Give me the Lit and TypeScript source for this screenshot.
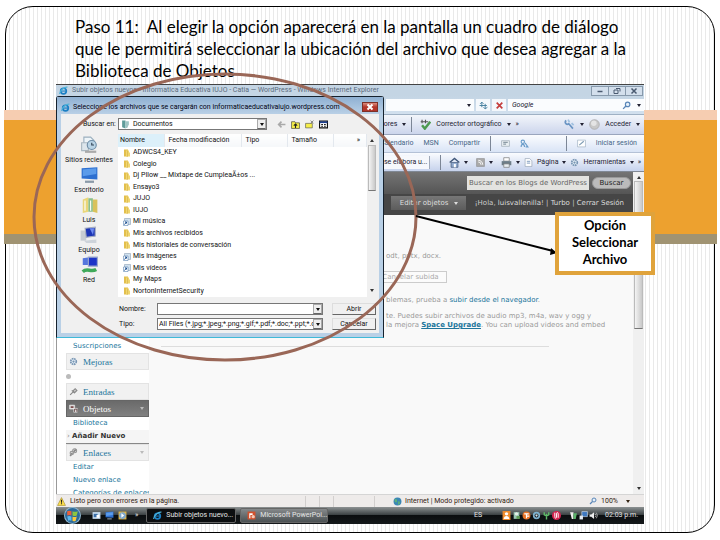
import { LitElement, html, css, svg } from "lit";
import { customElement } from "lit/decorators.js";

type Kind = "folder" | "link";
const files: [string, Kind][] = [
  ["ADWCS4_KEY", "folder"],
  ["Colegio", "folder"],
  ["Dj PIlow __ Mixtape de CumpleaÃ±os ...", "folder"],
  ["Ensayo3", "folder"],
  ["JUJO", "folder"],
  ["IUJO", "folder"],
  ["Mi música", "link"],
  ["Mis archivos recibidos", "folder"],
  ["Mis historiales de conversación", "folder"],
  ["Mis imágenes", "link"],
  ["Mis vídeos", "link"],
  ["My Maps", "folder"],
  ["NortonInternetSecurity", "folder"],
];

const shapes: Record<string, unknown> = {
  ie: svg`<circle cx="8" cy="9" r="5" fill="none" stroke="#1b7fc4" stroke-width="3"/><path d="M4 9h9" stroke="#1b7fc4" stroke-width="2"/><path d="M1 14C1 9 9 1 15 2" fill="none" stroke="#4db3d8" stroke-width="2"/>`,
  folder: svg`<path d="M2 1h8v14H2z" fill="#e3bf4c"/><path d="M6 3h6v4h2v8H6z" fill="#f0d670"/><path d="M9 4v11" stroke="#cfa93c"/>`,
  link: svg`<path d="M3 1h12v12H3z" fill="#cfe0ee" stroke="#7c93a8"/><path d="M1 6h9v9H1z" fill="#fff" stroke="#3c6fa5"/><path d="M3 13l4-5M4 8h3v3" stroke="#1b4f8f" stroke-width="2" fill="none"/>`,
  docs: svg`<path d="M2 1h6v14l-6-2z" fill="#5f9c9a"/><path d="M8 2h6v6l-3 6H8z" fill="#9fc5c4"/>`,
  back: svg`<path d="M15 8H3M8 3L3 8l5 5" fill="none" stroke="#a9a9a9" stroke-width="3"/>`,
  up: svg`<path d="M1 3h6l1 2h7v10H1z" fill="#f5ee4a" stroke="#222"/><path d="M8 14V7M5 10l3-3 3 3" fill="none" stroke="#222" stroke-width="2"/>`,
  add: svg`<path d="M1 6h12v8H1z" fill="#f5ee4a" stroke="#444"/><path d="M10 1l5 5M15 1l-5 5" stroke="#777" stroke-width="1.5"/>`,
  view: svg`<path d="M1 2h14v12H1z" fill="#fff" stroke="#111" stroke-width="2"/><path d="M1 4h14" stroke="#1d3f8f" stroke-width="3"/><path d="M4 8h3M9 8h3M4 11h3M9 11h3" stroke="#111" stroke-width="2"/>`,
  recent: svg`<path d="M3 1h6l3 3v7H3z" fill="#eef5f9" stroke="#9bb0bf"/><path d="M1 6h6v7H1z" fill="#dde6ec" stroke="#a9b7c1"/><circle cx="10" cy="8" r="4" fill="#b9d4e6" stroke="#6d8ca5"/><path d="M10 6v2h2" stroke="#345" fill="none"/><path d="M4 14h10" stroke="#aaa" stroke-width="2"/>`,
  desk: svg`<path d="M1 2l14-1v11l-14-1z" fill="#2d6fd0"/><path d="M2 3l12-1v5L2 9z" fill="#5b9bea"/><path d="M4 14h8" stroke="#8a9aa8" stroke-width="2"/>`,
  user: svg`<path d="M2 3l5-2v13l-5 1z" fill="#e9d678"/><path d="M7 2h4v12H7z" fill="#8bbf8a"/><path d="M11 3h4v12l-4-1z" fill="#d9c25c"/><path d="M4 4v9M9 4v9" stroke="#fff"/>`,
  pc: svg`<path d="M1 4h5v9H1z" fill="#c6ccd2"/><path d="M5 2l9-1v8l-8 1z" fill="#1c35b5" stroke="#a4acc0"/><path d="M9 2l4 0-1 6z" fill="#6f8cf0"/><path d="M4 13l11-1v3H6z" fill="#cdd3da"/>`,
  net: svg`<path d="M2 2l6-1v7H2z" fill="#5577dd"/><path d="M7 1h8v8H7z" fill="#1c35c8" stroke="#9aa8cc"/><path d="M2 14c4-4 7 1 12-2" stroke="#3faa5a" stroke-width="3" fill="none"/>`,
  refresh: svg`<path d="M5 2v9M2 5l3-3 3 3M11 14V5M8 11l3 3 4-3M1 8h13" fill="none" stroke="#3f7c9c" stroke-width="1.6"/>`,
  stop: svg`<path d="M3 3l10 10M13 3L3 13" stroke="#c43d3d" stroke-width="3"/>`,
  lens: svg`<circle cx="10" cy="6" r="4" fill="#e5f0fa" stroke="#5a86b8" stroke-width="2"/><path d="M7 9l-5 5" stroke="#5a86b8" stroke-width="2.5"/>`,
  check: svg`<path d="M1 4h11M3 1v5M8 1v5" stroke="#555" stroke-width="1.6"/><path d="M3 9l4 5 8-10" fill="none" stroke="#4d9a50" stroke-width="3.5"/>`,
  wrench: svg`<path d="M3 2c-3 4 1 7 4 5l6 7" stroke="#6b95c4" stroke-width="2.5" fill="none"/><path d="M6 1l2 4M11 6l3 3" stroke="#9fc0e0" stroke-width="2.5"/>`,
  ball: svg`<circle cx="8" cy="8" r="7" fill="#c8c8c8" stroke="#a5a5a5"/><circle cx="7" cy="6" r="4" fill="#e4e4e4"/>`,
  card: svg`<path d="M1 3h14v10H1z" fill="#e9eff2" stroke="#8c9ba5"/><path d="M4 6h8M4 9h5" stroke="#8c9ba5" stroke-width="2"/>`,
  share: svg`<circle cx="5" cy="5" r="3" fill="none" stroke="#6a9cc9" stroke-width="2"/><path d="M2 14c0-6 6-6 6 0M9 7l5 7h-4" fill="none" stroke="#6a9cc9" stroke-width="2"/>`,
  box: svg`<path d="M1 2h14v12H1z" fill="#fff" stroke="#8fa3b5"/><path d="M4 11l8-7" stroke="#7d9bb3" stroke-width="2"/>`,
  home: svg`<path d="M1 8l7-6 7 6" fill="none" stroke="#40577a" stroke-width="2"/><path d="M3 8h10v7H3z" fill="#8fa8cc" stroke="#40577a"/><path d="M7 10h3v5H7z" fill="#fff"/>`,
  rss: svg`<path d="M1 1h14v14H1z" fill="#aaa" stroke="#888"/><path d="M4 7a5 5 0 015 5M4 4a8 8 0 018 8" stroke="#fff" stroke-width="1.6" fill="none"/>`,
  print: svg`<path d="M4 1h8v5H4z" fill="#fff" stroke="#777"/><path d="M1 6h14v6H1z" fill="#6d7d88"/><path d="M4 10h8v5H4z" fill="#e9eef2" stroke="#777"/>`,
  page: svg`<path d="M2 1h8l4 4v10H2z" fill="#fff" stroke="#8494a8"/><path d="M5 6h6M5 9h6" stroke="#9db3cd" stroke-width="2"/>`,
  gear: svg`<circle cx="8" cy="8" r="5" fill="#e6eff7" stroke="#7795b3" stroke-width="3" stroke-dasharray="3 1"/><circle cx="8" cy="8" r="2" fill="#7795b3"/>`,
  pin: svg`<path d="M2 14l5-5M5 6l5 5M7 7l4-4 3 3-4 4z" fill="#ccc" stroke="#888" stroke-width="2"/>`,
  media: svg`<path d="M1 2h9v7H1z" fill="#ddd" stroke="#eee"/><path d="M3 4h5v3H3z" fill="#744"/><path d="M8 7h7v8H8z" fill="#eee"/><path d="M10 14v-5h4v5" fill="none" stroke="#533" stroke-width="1.5"/>`,
  chain: svg`<path d="M2 14l4-5M8 7l5-5" stroke="#888" stroke-width="3"/><circle cx="10" cy="5" r="3.5" fill="none" stroke="#999" stroke-width="2"/><circle cx="5" cy="9" r="3" fill="none" stroke="#999" stroke-width="2"/>`,
  warn: svg`<path d="M8 1l7 14H1z" fill="#ffe04d" stroke="#9a8420"/><path d="M8 5v5M8 11v2" stroke="#222" stroke-width="2"/>`,
  globe: svg`<circle cx="8" cy="8" r="7" fill="#3a86b5"/><path d="M3 4c3-2 5 1 4 4s-3 1-4 0zM9 8c3-1 4 1 3 4l-3 2z" fill="#5cb37a"/>`,
  flag: svg`<circle cx="8" cy="8" r="8" fill="#8fb6cf"/><circle cx="8" cy="8" r="7" fill="#2c6a9a"/><path d="M3 4q2-1 4 0v4q-2-1-4 0z" fill="#e8603a"/><path d="M8 4q2 1 5 0l-1 4q-2 1-4 0z" fill="#8cc63f"/><path d="M3 9q2-1 4 0v4q-2-1-3 0z" fill="#5cb8ee"/><path d="M8 9q2 1 4 0l-1 4q-1 1-3 0z" fill="#fbc93a"/>`,
  win: svg`<path d="M1 2h14v12H1z" fill="#c8ddf0"/><path d="M3 5h7v6H3z" fill="#3b6fa8"/><path d="M8 7h5v5H8z" fill="#fff"/>`,
  play: svg`<path d="M1 1h14v14H1z" fill="#e0b544"/><circle cx="8" cy="8" r="6" fill="#7fa8cc"/><path d="M6 4l5 4-5 4z" fill="#fff"/>`,
  ppt: svg`<path d="M1 1h14v14H1z" fill="#d2502c"/><path d="M4 4h6v3H6v6H4z" fill="#fff"/><circle cx="11" cy="10" r="3" fill="#f4c8b5"/>`,
  t1: svg`<path d="M1 0h14v16H1z" fill="#ef8c2c"/><circle cx="8" cy="5" r="3" fill="#fff"/><path d="M3 14c0-7 10-7 10 0z" fill="#fff"/>`,
  t2: svg`<path d="M3 2h10v12H3z" fill="#9cc7b5"/><circle cx="8" cy="5" r="3" fill="#e5efe9"/><path d="M8 9h6v5H8z" fill="#5e9a52"/>`,
  t3: svg`<circle cx="8" cy="8" r="7" fill="#e9742a"/><path d="M4 5h8M8 5v8M9 9h4" stroke="#fff" stroke-width="2"/>`,
  t4: svg`<circle cx="8" cy="8" r="5" fill="none" stroke="#7eb2cf" stroke-width="3"/><circle cx="8" cy="8" r="2" fill="#d3e7f1"/>`,
  t5: svg`<path d="M8 15V5M4 2v5l4 2 4-2V2" fill="none" stroke="#5fbb69" stroke-width="2.5"/>`,
  t6: svg`<circle cx="8" cy="8" r="8" fill="#d6224f"/><path d="M5 3v7c0 4 3 3 3 1V5c0-3 3-3 3 0v7" stroke="#fff" stroke-width="1.7" fill="none"/>`,
  t7: svg`<path d="M2 2h6v12H5z" fill="#eee"/><path d="M8 4h6l-2 10H8z" fill="#5cb36b"/>`,
  t8: svg`<path d="M5 1h10v9H5z" fill="#3e78c0" stroke="#dfe8f2"/><path d="M1 8h6v7H1z" fill="#e6edf5"/>`,
  t9: svg`<path d="M1 6h3l5-4v12l-5-4H1z" fill="#eee"/><path d="M11 5q3 3 0 6M13 3q4 5 0 10" stroke="#bbb" stroke-width="1.4" fill="none"/>`,
  min: svg`<path d="M3 9h10" stroke="#4a5a70" stroke-width="3"/>`,
  max: svg`<path d="M6 3h8v6M2 6h8v7H2z" fill="none" stroke="#4a5a70" stroke-width="2"/>`,
  close: svg`<path d="M3 3l10 10M13 3L3 13" stroke="#4a5a70" stroke-width="3"/>`,
  closew: svg`<path d="M3 3l10 10M13 3L3 13" stroke="#fff" stroke-width="4"/>`,
};
const icon = (name: string, size = "") =>
  html`<svg class="i ${size}" viewBox="0 0 16 16" aria-hidden="true">${shapes[name]}</svg>`;
const down = html`<span class="tri"></span>`;

@customElement("app-root")
export class AppRoot extends LitElement {
  static styles = css`
    * { box-sizing: border-box; }
    :host {
      display: block; position: relative; min-height: 100vh; padding: 6px 5px 7px;
      background: #fff; color: #111; font: 7px/9px Roboto, "Noto Sans", sans-serif;
      overflow: hidden;
    }
    button, input, select { font: inherit; color: inherit; margin: 0; padding: 0; border: 0; background: none; border-radius: 0; appearance: none; min-width: 0; }
    a { color: #21759b; text-decoration: none; }
    ul { list-style: none; margin: 0; padding: 0; }
    p, h1, h2 { margin: 0; font-size: inherit; font-weight: inherit; }
    .i { width: 9px; height: 9px; flex: none; display: block; }
    .i.s { width: 8px; height: 8px; }
    .i.m { width: 11px; height: 11px; }
    .i.l { width: 19px; height: 18px; }
    .tri { flex: none; border: 2px solid transparent; border-top: 3px solid currentColor; border-bottom: 0; }
    .grow { flex: 1; }

    .slide {
      min-height: calc(100vh - 13px); border: 1px solid #000; border-radius: 28px;
      padding: 9px 70px 8px 50px; display: flex; flex-direction: column;
      background: repeating-linear-gradient(90deg, #fff 0 3px, #e9e9e9 3px 4px);
    }
    .band {
      position: absolute; left: 4px; right: 3px; top: 110px; height: 134px;
      background: linear-gradient(#f6cdb1 0 10px, #eda12f 10px 124px, #a09372 124px);
    }
    .head { font: 17px/22px Lato, "Open Sans", sans-serif; font-variant-ligatures: none; color: #000; padding-left: 19px; margin-bottom: 2px; }

    .browser { position: relative; flex: 1; display: flex; flex-direction: column; border-top: 1px solid #444; }
    .bar { display: flex; align-items: center; white-space: nowrap; color: #223; }
    .title { height: 11px; background: #c4d5e4; color: #5b6b7b; padding: 0 1px 0 3px; gap: 4px; }
    .wins { display: flex; }
    .wins button { width: 18px; height: 10px; border: 1px solid #8799ab; background: #d3dfec; display: grid; place-items: center; margin-left: -1px; }
    .address { height: 19px; background: linear-gradient(#c4d5e4, #d2e0ee); padding: 0 0 0 330px; gap: 2px; border-bottom: 1px solid #9fb1c4; }
    .field { height: 12px; flex: 1; background: #fafcfe; display: flex; align-items: center; justify-content: flex-end; padding-right: 3px; }
    .sq { width: 14px; height: 12px; background: #f4f8fc; display: grid; place-items: center; }
    .search { width: 136px; height: 12px; background: #fafcfe; display: flex; align-items: center; gap: 6px; padding: 0 3px 0 4px; }
    .search input { flex: 1; font-style: italic; }
    .google { height: 20px; background: linear-gradient(#f3f6fb, #ccd5ec); border-bottom: 1px solid #9aa5bd; gap: 5px; padding: 0 4px 0 314px; }
    .google .sep { margin-right: 3px; }
    .msn { height: 18px; background: linear-gradient(#fbfcfe, #d9e4f6); border-bottom: 1px solid #b4c1d6; color: #456686; padding: 0 7px 0 324px; }
    .msn a { color: #456686; }
    .cmd { height: 19px; background: linear-gradient(#fafcff, #c6d2ec); border-bottom: 1px solid #808894; gap: 4px; padding: 0 3px 0 328px; }
    .sep { width: 1px; height: 15px; background: #7c8696; flex: none; }
    .tab { width: 46px; flex: none; height: 13px; border-right: 1px solid #9fa9ba; background: #f6f8fc; line-height: 13px; }
    .msn .g1 { margin-left: 10px; }

    .view { flex: 1; display: flex; background: #f9f9f9; }
    .site { flex: 1; display: flex; flex-direction: column; min-width: 0; border-left: 1px solid #999; }
    .scroll { width: 11px; background: #f0f0f0; display: flex; flex-direction: column; align-items: center; justify-content: space-between; color: #333; padding: 4px 0; }
    .scroll .thumb { width: 9px; height: 148px; margin-top: 2px; background: linear-gradient(90deg, #f4f4f4, #c9c9c9); border: 1px solid #bbb; border-bottom-color: #777; }
    .tri.up { transform: rotate(180deg); }
    .top1 { height: 22px; background: linear-gradient(#747474, #555); display: flex; justify-content: flex-end; align-items: center; gap: 3px; padding: 0 2px; font: 7px/9px "DejaVu Sans", sans-serif; }
    .top1 input { width: 122px; height: 14px; background: #e3e3e0; color: #666; padding: 0 2px; }
    .top1 button { width: 39px; height: 12px; border-radius: 6px; background: #bbb; color: #222; border: 1px solid #999; line-height: 9px; }
    .top2 { height: 21px; background: #464646; color: #ccc; display: flex; justify-content: flex-end; align-items: center; font: 7px/9px "DejaVu Sans", sans-serif; gap: 9px; padding: 0 9px 3px 0; white-space: nowrap; }
    .top2 a { color: #ddd; }
    .top2 button { width: 75px; height: 14px; background: linear-gradient(#777, #5c5c5c); display: flex; align-items: center; justify-content: space-between; padding: 0 8px 0 9px; color: #ddd; }
    .cols { flex: 1; display: flex; }
    .side { width: 92px; padding: 125px 0 0 9px; background: #fff; font: 7px/13px "DejaVu Sans", sans-serif; height: 279px; overflow: hidden; }
    .side li { padding-left: 7px; height: 13px; background: #fff; white-space: nowrap; }
    .side .h { height: 17px; background: #f1f1f1; border: 1px solid #e3e3e3; display: flex; align-items: center; gap: 5px; padding: 0 4px 0 2px; font: 9px/12px "Liberation Serif", serif; color: #21759b; }
    .side .h a { flex: 1; }
    .side .h .tri { color: #bbb; }
    .side .on { background: linear-gradient(#6a6a6a, #808080); border-color: #666; color: #fff; }
    .side .on a { color: #fff; }
    .side .dot { height: 13px; padding: 4px 0 0; }
    .dot span { display: block; width: 5px; height: 5px; border-radius: 50%; background: #bbb; }
    .side .cur { background: #f5f5f5; border-bottom: 1px solid #888; font-weight: 700; padding-left: 1px; height: 14px; }
    .side .cur a { color: #333; }
    .side .cur span { color: #888; font-weight: 400; }
    .main { flex: 1; padding: 37px 24px 0 12px; font: 7px/9px "DejaVu Sans", sans-serif; color: #999; white-space: nowrap; min-width: 0; }
    .main p, .main button { display: block; margin-left: 225px; }
    .main .a { margin-bottom: 10px; }
    .main button { width: 73px; height: 12px; margin: 0 0 13px 213px; border: 1px solid #ccc; background: #fbfbfb; color: #aaa; }
    .main .b { margin-bottom: 7px; }
    .main u { font-weight: 700; }
    .main hr { border: 0; border-top: 1px solid #ddd; margin: 16px 60px 0 0; }

    .status { height: 13px; background: #eeebea; border-top: 1px solid #d5d5d5; gap: 4px; padding: 0 14px 0 1px; color: #321; }
    .status .cell { width: 14px; height: 11px; border-left: 1px solid #d2cfce; }
    .status .wide { width: 42px; border-right: 1px solid #d2cfce; }
    .status .zone { width: 192px; display: flex; gap: 3px; align-items: center; }
    .status .cells { display: flex; margin-right: 14px; }
    .task { height: 17px; background: linear-gradient(#8c9192, #3d4345 45%, #0b0e10 50%, #14181a); color: #e6e6e6; gap: 4px; padding: 0 6px 0 4px; }
    .task .orb { width: 24px; height: 17px; display: grid; place-items: center; margin-right: 4px; }
    .orb svg { width: 21px; height: 17px; }
    .task .t { width: 90px; height: 15px; border: 1px solid #666; border-radius: 2px; display: flex; align-items: center; gap: 4px; padding: 0 6px; background: #0c0e10; white-space: nowrap; }
    .task .t.n { background: linear-gradient(#85898b, #4b5153); width: 88px; }
    .tray { display: flex; gap: 1px; align-items: center; margin: 0 3px 0 16px; }
    .tray .gap { width: 6px; }

    .dialog { position: absolute; left: 0; top: 11px; width: 328px; height: 242px; border: 1px solid #16222e; border-bottom-color: #3fb9d8; border-radius: 3px 3px 0 0; background: #b9d0e6; padding: 0 4px 4px; display: flex; flex-direction: column; color: #111; }
    .dtitle { height: 17px; display: flex; align-items: center; gap: 3px; margin: 0 -4px; padding: 3px 5px 0 4px; background: linear-gradient(#8fb0d2, #b9d0e6); white-space: nowrap; }
    .dtitle h2 { flex: 1; color: #001; }
    .x { width: 16px; height: 10px; background: linear-gradient(#dd8d80, #b3352a 50%); border: 1px solid #7c3028; display: grid; place-items: center; }
    .client { flex: 1; background: #f0f0f0; display: grid; grid-template-columns: 57px 1fr; grid-template-rows: 20px 163px 1fr; }
    .client label { white-space: nowrap; }
    .look { grid-column: 1 / 3; display: flex; align-items: center; gap: 5px; padding-left: 22px; }
    .look label { width: 30px; }
    .combo { height: 12px; border: 1px solid #777; background: #fff; display: flex; align-items: center; }
    .look .combo { width: 149px; padding-left: 2px; gap: 3px; margin-right: 5px; }
    .combo select, .combo input { flex: 1; height: 10px; width: 100%; line-height: 10px; }
    .drop { width: 9px; height: 10px; border: 1px solid #aaa; border-bottom-color: #666; background: #eee; display: grid; place-items: center; flex: none; }
    .places { padding: 2px 1px 0 0; display: grid; grid-auto-rows: 30px; justify-items: center; text-align: center; line-height: 8px; }
    .places button { display: grid; justify-items: center; align-content: start; gap: 2px; white-space: nowrap; }
    .list { display: flex; background: #fff; margin-right: 3px; min-width: 0; }
    table { flex: 1; width: 0; height: 163px; border-collapse: collapse; table-layout: fixed; }
    th, td { padding: 0; text-align: left; font-weight: 400; line-height: 9px; white-space: nowrap; }
    th { height: 13px; padding-left: 4px; border-right: 1px solid #e3e8ee; background: linear-gradient(#fff, #f5f7f9); }
    th.sel { background: #dcf0fa; width: 46px; padding-left: 2px; }
    th.f { width: 77px; } th.k { width: 46px; }
    th.e { text-align: right; padding-right: 6px; }
    td { padding-left: 5px; }
    td span { display: flex; align-items: center; gap: 2px; }
    .list .scroll { width: 9px; justify-content: flex-start; padding: 5px 0; }
    .list .thumb { width: 8px; height: 46px; flex: none; margin-top: 3px; }
    .list .end { margin-top: auto; }
    .name { grid-column: 1 / 3; display: grid; grid-template-columns: 39px 175px 44px; row-gap: 3px; grid-auto-rows: 12px; padding: 6px 3px 0 57px; align-items: center; justify-content: start; }
    .name .combo { width: 166px; padding-left: 1px; }
    .name label { padding-left: 1px; }
    .name button { height: 12px; border: 1px solid #ddd; border-right-color: #666; border-bottom-color: #666; background: #f0f0f0; line-height: 10px; }

    .ring { position: absolute; left: 32px; top: 72px; width: 386px; height: 290px; pointer-events: none; }
    .arrow { position: absolute; left: 415px; top: 214px; height: 42px; width: calc(100% - 578px); pointer-events: none; }
    .call { position: absolute; right: 65px; top: 212px; width: 100px; height: 63px; border: 4px solid #e0a33b; background: #fff; color: #000; font: 700 13px/17px Lato, "Open Sans", sans-serif; text-align: center; padding-top: 1px; }
  `;

  private place(name: string, label: string) {
    return html`<button type="button">${icon(name, "l")}${label}</button>`;
  }

  render() {
    return html`
      <div class="slide">
        <div class="band"></div>
        <h1 class="head">Paso 11: &nbsp;Al elegir la opción aparecerá en la pantalla un cuadro de diálogo<br />que le permitirá seleccionar la ubicación del archivo que desea agregar a la<br />Biblioteca de Objetos</h1>
        <div class="browser">
          <div class="bar title">${icon("ie")}<span class="grow">Subir objetos nuevos ‹ Informatica Educativa IUJO - Catia — WordPress - Windows Internet Explorer</span>
            <div class="wins">
              <button aria-label="Minimizar">${icon("min", "s")}</button><button aria-label="Restaurar">${icon("max", "s")}</button><button aria-label="Cerrar">${icon("close", "s")}</button>
            </div>
          </div>
          <div class="bar address">
            <div class="field">${down}</div>
            <button class="sq" aria-label="Actualizar">${icon("refresh")}</button>
            <button class="sq" aria-label="Detener">${icon("stop")}</button>
            <div class="search"><input aria-label="Buscar" value="Google" />${icon("lens")}${down}</div>
          </div>
          <div class="bar google"><span>rcadores</span>${down}<span class="sep"></span>${icon("check", "m")}<span>Corrector ortográfico</span>${down}<span>»</span><span class="grow"></span>${icon("wrench", "m")}${down}${icon("ball", "m")}<span>Acceder</span>${down}</div>
          <div class="bar msn"><a href="#">Calendario</a><a class="g1" href="#">MSN</a><a class="g1" href="#">Compartir</a><span class="g1 sep"></span><span class="g1">${icon("card")}</span><span class="g1">${icon("share")}</span><span class="grow"></span><span class="sep"></span><span class="g1">${icon("box")}</span><a class="g1" href="#">Iniciar sesión</a></div>
          <div class="bar cmd"><span class="tab">se elabora u...</span><span class="grow"></span><span class="sep"></span><span></span>${icon("home", "m")}${down}<span></span>${icon("rss")}${down}<span></span>${icon("print", "m")}${down}${icon("page")}<span>Página</span>${down}${icon("gear")}<span>Herramientas</span>${down}<span>»</span></div>

          <div class="view">
            <div class="site">
              <div class="top1"><input aria-label="Buscar en los blogs" value="Buscar en los Blogs de WordPress.co" /><button>Buscar</button></div>
              <div class="top2"><button>Editar objetos ${down}</button><span>¡Hola, <a href="#">luisvallenilla</a>! | <a href="#">Turbo</a> | <a href="#">Cerrar Sesión</a></span></div>
              <div class="cols">
                <ul class="side">
                  <li><a href="#">Suscripciones</a></li>
                  <li class="h">${icon("gear")}<a href="#">Mejoras</a></li>
                  <li class="dot"><span></span></li>
                  <li class="h">${icon("pin")}<a href="#">Entradas</a></li>
                  <li class="h on">${icon("media")}<a href="#">Objetos</a>${down}</li>
                  <li><a href="#">Biblioteca</a></li>
                  <li class="cur"><span>› </span><a href="#">Añadir Nuevo</a></li>
                  <li class="h">${icon("chain")}<a href="#">Enlaces</a>${down}</li>
                  <li><a href="#">Editar</a></li>
                  <li><a href="#">Nuevo enlace</a></li>
                  <li><a href="#">Categorías de enlaces</a></li>
                </ul>
                <div class="main">
                  <p class="a">odt, pptx, docx.</p>
                  <button>Cancelar subida</button>
                  <p class="b">blemas, prueba a <a href="#">subir desde el navegador</a>.</p>
                  <p>te. Puedes subir archivos de audio mp3, m4a, wav y ogg y</p>
                  <p>la mejora <a href="#"><u>Space Upgrade</u></a>. You can upload videos and embed</p>
                  <hr />
                </div>
              </div>
            </div>
            <div class="scroll"><span class="tri up"></span><span class="thumb"></span><span class="grow"></span>${down}</div>
          </div>

          <div class="bar status">${icon("warn")}<span>Listo pero con errores en la página.</span><span class="grow"></span><span class="cells"><span class="cell"></span><span class="cell"></span><span class="cell wide"></span></span><span class="zone">${icon("globe")}Internet | Modo protegido: activado</span>${icon("lens", "s")}<span>100%</span><span></span>${down}</div>
          <div class="bar task"><button class="orb" aria-label="Inicio">${icon("flag")}</button>${icon("win")}${icon("desk")}${icon("play")}<span></span><span>»</span><span></span>
            <button class="t">${icon("ie")}Subir objetos nuevo...</button><button class="t n">${icon("ppt")}Microsoft PowerPoi...</button>
            <span class="grow"></span><span>ES</span>
            <span class="tray">${["t1", "t2", "t3", "t4", "t5", "t6"].map((n) => icon(n))}<span class="gap"></span>${["t7", "t8", "t9"].map((n) => icon(n))}</span>
            <span>02:03 p.m.</span>
          </div>

          <section class="dialog">
            <div class="dtitle">${icon("ie")}<h2>Seleccione los archivos que se cargarán con informaticaeducativaiujo.wordpress.com</h2><button class="x" aria-label="Cerrar diálogo">${icon("closew", "s")}</button></div>
            <div class="client">
              <div class="look">
                <label for="dir">Buscar en:</label>
                <div class="combo">${icon("docs")}<select id="dir"><option>Documentos</option></select><span class="drop">${down}</span></div>
                ${icon("back")}${icon("up")}${icon("add")}${icon("view")}
              </div>
              <div class="places">
                ${this.place("recent", "Sitios recientes")}${this.place("desk", "Escritorio")}${this.place("user", "Luis")}${this.place("pc", "Equipo")}${this.place("net", "Red")}
              </div>
              <div class="list">
                <table>
                  <thead><tr><th class="sel">Nombre</th><th class="f">Fecha modificación</th><th class="k">Tipo</th><th class="k">Tamaño</th><th class="e">»</th></tr></thead>
                  <tbody>${files.map(([n, k]) => html`<tr><td colspan="5"><span>${icon(k, "s")}${n}</span></td></tr>`)}</tbody>
                </table>
                <div class="scroll"><span class="tri up"></span><span class="thumb"></span><span class="tri end"></span></div>
              </div>
              <div class="name">
                <label for="fn">Nombre:</label>
                <div class="combo"><input id="fn" /><span class="drop">${down}</span></div><button>Abrir</button>
                <label for="ft">Tipo:</label>
                <div class="combo"><select id="ft"><option>All Files (*.jpg;*.jpeg;*.png;*.gif;*.pdf;*.doc;*.ppt;*.odt;*.ppt</option></select><span class="drop">${down}</span></div><button>Cancelar</button>
              </div>
            </div>
          </section>
        </div>
      </div>
      <svg class="ring" viewBox="0 0 386 290" aria-hidden="true"><ellipse cx="193" cy="145" rx="191" ry="143" fill="none" stroke="#9a6757" stroke-width="3" /></svg>
      <svg class="arrow" viewBox="0 0 142 42" preserveAspectRatio="none" aria-hidden="true"><path d="M1 2L138 37" stroke="#000" stroke-width="2" /><path d="M136 34l6 5-7 2z" /></svg>
      <div class="call">Opción<br />Seleccionar<br />Archivo</div>
    `;
  }
}
